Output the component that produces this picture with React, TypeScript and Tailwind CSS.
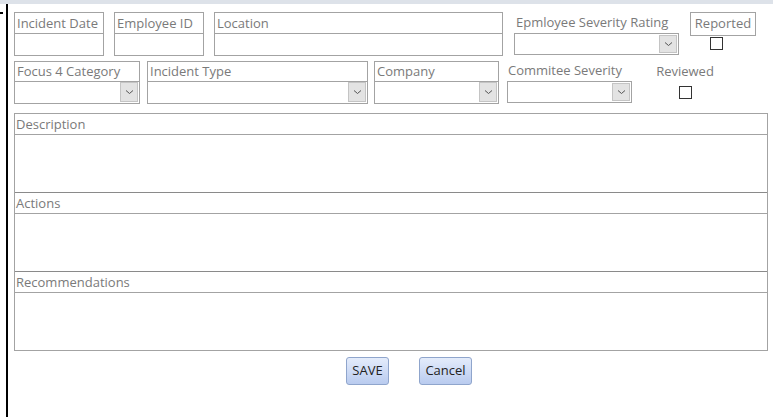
import React from "react"

const font = { fontFamily: '"Open Sans", "Noto Sans", sans-serif' }

// Boxed text field: label on top, empty input below
function Field({ label, w }: { label: string; w: string }) {
    return (
        <div className={`${w} h-[44px] flex flex-col border border-[#a3a3a3] bg-white`}>
            <div className="h-[21px] border-b border-[#a3a3a3] px-[2px] text-[13px] leading-[20px] text-[#7a7a7a]">
                {label}
            </div>
            <div className="flex-1" />
        </div>
    )
}

function Chevron() {
    return (
        <svg width="9" height="6" viewBox="0 0 9 6" fill="none">
            <path d="M1 1.5 L4.5 4.5 L8 1.5" stroke="#555" strokeWidth="1" />
        </svg>
    )
}

function Combo({ className = "" }: { className?: string }) {
    return (
        <div className={`flex h-[22px] border border-[#a3a3a3] bg-white ${className}`}>
            <div className="flex-1" />
            <div className="w-[18px] m-[1px] flex items-center justify-center bg-[#e3e3e3] border border-[#c4c4c4]">
                <Chevron />
            </div>
        </div>
    )
}

// Boxed combo: label on top, dropdown below
function ComboField({ label, w }: { label: string; w: string }) {
    return (
        <div className={`${w} h-[43px] flex flex-col border border-[#a3a3a3] bg-white`}>
            <div className="h-[20px] border-b border-[#a3a3a3] px-[2px] text-[13px] leading-[19px] text-[#7a7a7a]">
                {label}
            </div>
            <div className="flex-1 flex">
                <div className="flex-1" />
                <div className="w-[18px] mb-[1px] mr-[1px] flex items-center justify-center bg-[#e3e3e3] border border-[#c4c4c4]">
                    <Chevron />
                </div>
            </div>
        </div>
    )
}

function Check() {
    return <div className="w-[13px] h-[13px] border border-[#333] bg-white" />
}

function Memo({ label }: { label: string }) {
    return (
        <div className="flex flex-col">
            <div className="h-[21px] border-b border-[#a3a3a3] px-[1px] text-[13px] leading-[20px] text-[#7a7a7a]">
                {label}
            </div>
            <div className="h-[57px]" />
        </div>
    )
}

function Button({ label, w }: { label: string; w: string }) {
    return (
        <div
            className={`${w} h-[28px] flex items-center justify-center rounded-[3px] border border-[#8fa5cc] bg-gradient-to-b from-[#e4ecfb] to-[#b9cbef] text-[13px] text-[#222]`}
        >
            {label}
        </div>
    )
}

export default function App() {
    return (
        <div className="w-[773px] h-[417px] bg-white overflow-hidden flex flex-col relative" style={font}>
            {/* top band */}
            <div className="h-[4px] bg-[#dde2e9]" />
            <div className="absolute left-0 top-[12px] w-[3px] h-[2px] bg-black" />

            <div className="flex-1 ml-[6px] border-l-2 border-black pl-[6px] pt-[8px]">
                {/* row 1 */}
                <div className="flex items-start">
                    <Field label="Incident Date" w="w-[90px]" />
                    <div className="ml-[10px]">
                        <Field label="Employee ID" w="w-[90px]" />
                    </div>
                    <div className="ml-[10px]">
                        <Field label="Location" w="w-[289px]" />
                    </div>
                    <div className="ml-[11px] w-[165px] flex flex-col">
                        <div className="h-[21px] pl-[2px] text-[13px] leading-[20px] text-[#7a7a7a]">
                            Epmloyee Severity Rating
                        </div>
                        <Combo />
                    </div>
                    <div className="ml-[11px] flex flex-col items-center w-[66px]">
                        <div className="w-[66px] h-[24px] border border-[#a3a3a3] text-[13px] leading-[21px] text-[#7a7a7a] text-center">
                            Reported
                        </div>
                        <div className="mt-[1px] -ml-[14px]">
                            <Check />
                        </div>
                    </div>
                </div>

                {/* row 2 */}
                <div className="flex items-start mt-[5px]">
                    <ComboField label="Focus 4 Category" w="w-[126px]" />
                    <div className="ml-[7px]">
                        <ComboField label="Incident Type" w="w-[221px]" />
                    </div>
                    <div className="ml-[6px]">
                        <ComboField label="Company" w="w-[125px]" />
                    </div>
                    <div className="ml-[8px] w-[125px] flex flex-col">
                        <div className="h-[20px] pl-[1px] text-[13px] leading-[19px] text-[#7a7a7a]">
                            Commitee Severity
                        </div>
                        <Combo />
                    </div>
                    <div className="ml-[21px] flex flex-col items-center w-[64px]">
                        <div className="h-[25px] pt-[1px] text-[13px] leading-[18px] text-[#7a7a7a]">Reviewed</div>
                        <Check />
                    </div>
                </div>

                {/* memo boxes */}
                <div className="mt-[9px] w-[754px] border border-[#a3a3a3] flex flex-col [&>*+*]:border-t [&>*+*]:border-[#8a8a8a]">
                    <Memo label="Description" />
                    <Memo label="Actions" />
                    <Memo label="Recommendations" />
                </div>

                {/* buttons */}
                <div className="mt-[6px] flex pl-[332px] gap-[30px]">
                    <Button label="SAVE" w="w-[43px]" />
                    <Button label="Cancel" w="w-[53px]" />
                </div>
            </div>
        </div>
    )
}
